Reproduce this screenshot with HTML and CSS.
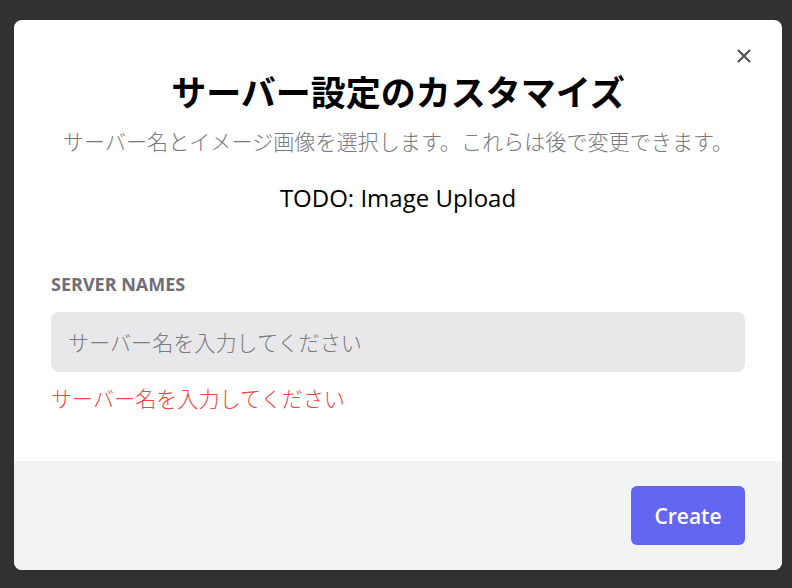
FILE: index.html
```html
<!DOCTYPE html>
<html lang="ja">
<head>
    <meta charset="UTF-8">
    <meta name="viewport" content="width=device-width, initial-scale=1.0">
    <title>サーバー設定</title>
    <link rel="stylesheet" href="styles.css">
</head>
<body>
    <div class="modal">
        <button type="button" class="btn-cerrar" aria-label="close">
            <svg width="14" height="14" viewBox="0 0 14 14">
                <path d="M1 1L13 13M13 1L1 13" stroke="#4a4a4a" stroke-width="2" fill="none"/>
            </svg>
        </button>

        <div class="modal-cuerpo">
            <h1 class="titulo">サーバー設定のカスタマイズ</h1>
            <p class="subtitulo">サーバー名とイメージ画像を選択します。これらは後で変更できます。</p>
            <div class="subida">TODO: Image Upload</div>

            <label class="etiqueta">SERVER NAMES</label>
            <input type="text" class="entrada" placeholder="サーバー名を入力してください">
            <p class="error">サーバー名を入力してください</p>
        </div>

        <div class="modal-pie">
            <button type="button" class="btn">Create</button>
        </div>
    </div>
</body>
</html>
```

FILE: styles.css
```css
:root {
    --color-primario: #6366f1;
    --texto-gris: #78787f;
}

body {
    margin: 0;
    background-color: #313131;
    font-family: "Open Sans", "Noto Sans CJK JP", sans-serif;
    color: #000;
}

.modal {
    position: relative;
    width: 768px;
    margin: 20px 0 0 14px;
    background-color: #fff;
    border-radius: 8px;
    overflow: hidden;
}

.btn-cerrar {
    position: absolute;
    top: 29px;
    right: 31px;
    width: 14px;
    height: 14px;
    padding: 0;
    border: none;
    background: none;
    line-height: 0;
    cursor: pointer;
}

.modal-cuerpo {
    padding: 49px 37px 49px 37px;
    display: flex;
    flex-direction: column;
}

.titulo {
    margin: 0;
    text-align: center;
    font-family: "Noto Sans CJK JP", sans-serif;
    font-size: 35px;
    line-height: 44px;
    font-weight: 700;
}

.subtitulo {
    margin: 14px 0 0;
    text-align: center;
    font-family: "Noto Sans CJK JP", sans-serif;
    font-size: 21.1px;
    line-height: 28px;
    font-weight: 300;
    color: var(--texto-gris);
    white-space: nowrap;
}

.subida {
    margin-top: 28px;
    text-align: center;
    font-size: 24px;
    line-height: 30px;
}

.etiqueta {
    margin-top: 60px;
    font-size: 18px;
    line-height: 22px;
    font-weight: 700;
    color: #6e6e78;
}

.entrada {
    margin-top: 17px;
    height: 60px;
    box-sizing: border-box;
    padding: 0 17px;
    border: none;
    border-radius: 8px;
    background-color: #e8e8ea;
    font-family: "Noto Sans CJK JP", sans-serif;
    font-size: 21.1px;
    font-weight: 300;
    color: #333;
    outline: none;
}

.entrada::placeholder {
    color: #7a7a7e;
}

.error {
    margin: 12px 0 0;
    font-family: "Noto Sans CJK JP", sans-serif;
    font-size: 21.1px;
    line-height: 28px;
    font-weight: 300;
    color: #ef4444;
}

.modal-pie {
    background-color: #f2f3f5;
    padding: 25px 37px;
    display: flex;
    justify-content: flex-end;
}

.btn {
    width: 114px;
    height: 59px;
    border: none;
    border-radius: 6px;
    background-color: var(--color-primario);
    color: #fff;
    font-family: "Open Sans", sans-serif;
    font-size: 21px;
    font-weight: 600;
    cursor: pointer;
}
```
